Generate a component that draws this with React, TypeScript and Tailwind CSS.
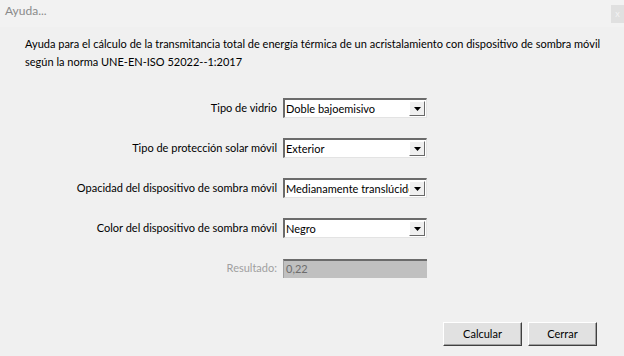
import { ReactNode } from "react";

const font = { fontFamily: 'Lato, "Liberation Sans", Arial, sans-serif' };

function Combo({ value }: { value: string }) {
  return (
    <div className="flex h-[20px] w-[144px] items-stretch border-t-2 border-l-2 border-t-[#6b6b6b] border-l-[#6b6b6b] border-r border-b border-r-[#e3e3e3] border-b-[#e3e3e3] bg-white">
      <div className="flex-1 overflow-hidden whitespace-nowrap pl-[1px] text-[11px] leading-[17px] text-black">
        {value}
      </div>
      <div className="my-[1px] mr-[1px] flex w-[16px] items-center justify-center border border-t-white border-l-white border-r-[#696969] border-b-[#696969] bg-[#f0f0f0]">
        <svg width="7" height="4" viewBox="0 0 7 4">
          <polygon points="0,0 7,0 3.5,4" fill="#000" />
        </svg>
      </div>
    </div>
  );
}

function Row({ label, children, disabled }: { label: string; children: ReactNode; disabled?: boolean }) {
  return (
    <div className="flex h-[40px] items-center">
      <div
        className={`w-[283px] pr-[6px] text-right text-[11px] ${disabled ? "text-[#a0a0a0]" : "text-black"}`}
      >
        {label}
      </div>
      {children}
    </div>
  );
}

function Button({ children }: { children: ReactNode }) {
  return (
    <div className="flex h-[24px] items-center justify-center border border-t-white border-l-white border-r-[#404040] border-b-[#404040] bg-[#e1e1e1] text-[11px] text-black shadow-[inset_-1px_-1px_0_#a0a0a0]">
      {children}
    </div>
  );
}

export default function App() {
  return (
    <div className="flex h-[356px] w-[624px] flex-col bg-[#f0f0f0]" style={font}>
      <div className="flex h-[27px] items-start justify-between bg-[#f2f2f2]">
        <div className="pl-[5px] pt-[2px] text-[12px] text-[#8a8a8a]">Ayuda...</div>
        <div className="mt-[5px] mr-0 flex h-[18px] w-[13px] items-center justify-center bg-[#e0e0e0] text-[9px] text-[#f4f4f4]">
          x
        </div>
      </div>
      <div className="pl-[25px] pt-[8px] text-[11px] leading-[18px] text-black">
        <div className="whitespace-nowrap">
          Ayuda para el cálculo de la transmitancia total de energía térmica de un acristalamiento con dispositivo de sombra móvil
        </div>
        <div>según la norma UNE-EN-ISO 52022--1:2017</div>
      </div>
      <div className="mt-[17px] flex flex-col">
        <Row label="Tipo de vidrio">
          <Combo value="Doble bajoemisivo" />
        </Row>
        <Row label="Tipo de protección solar móvil">
          <Combo value="Exterior" />
        </Row>
        <Row label="Opacidad del dispositivo de sombra móvil">
          <Combo value="Medianamente translúcido" />
        </Row>
        <Row label="Color del dispositivo de sombra móvil">
          <Combo value="Negro" />
        </Row>
        <Row label="Resultado:" disabled>
          <div className="h-[19px] w-[144px] border-t-2 border-l border-t-[#6b6b6b] border-l-[#a0a0a0] bg-[#c0c0c0] pl-[2px] text-[11px] leading-[16px] text-[#6d6d6d]">
            0,22
          </div>
        </Row>
      </div>
      <div className="mt-auto mb-[10px] flex justify-end gap-[6px] pr-[27px]">
        <div className="w-[79px]">
          <Button>Calcular</Button>
        </div>
        <div className="w-[69px]">
          <Button>Cerrar</Button>
        </div>
      </div>
    </div>
  );
}
